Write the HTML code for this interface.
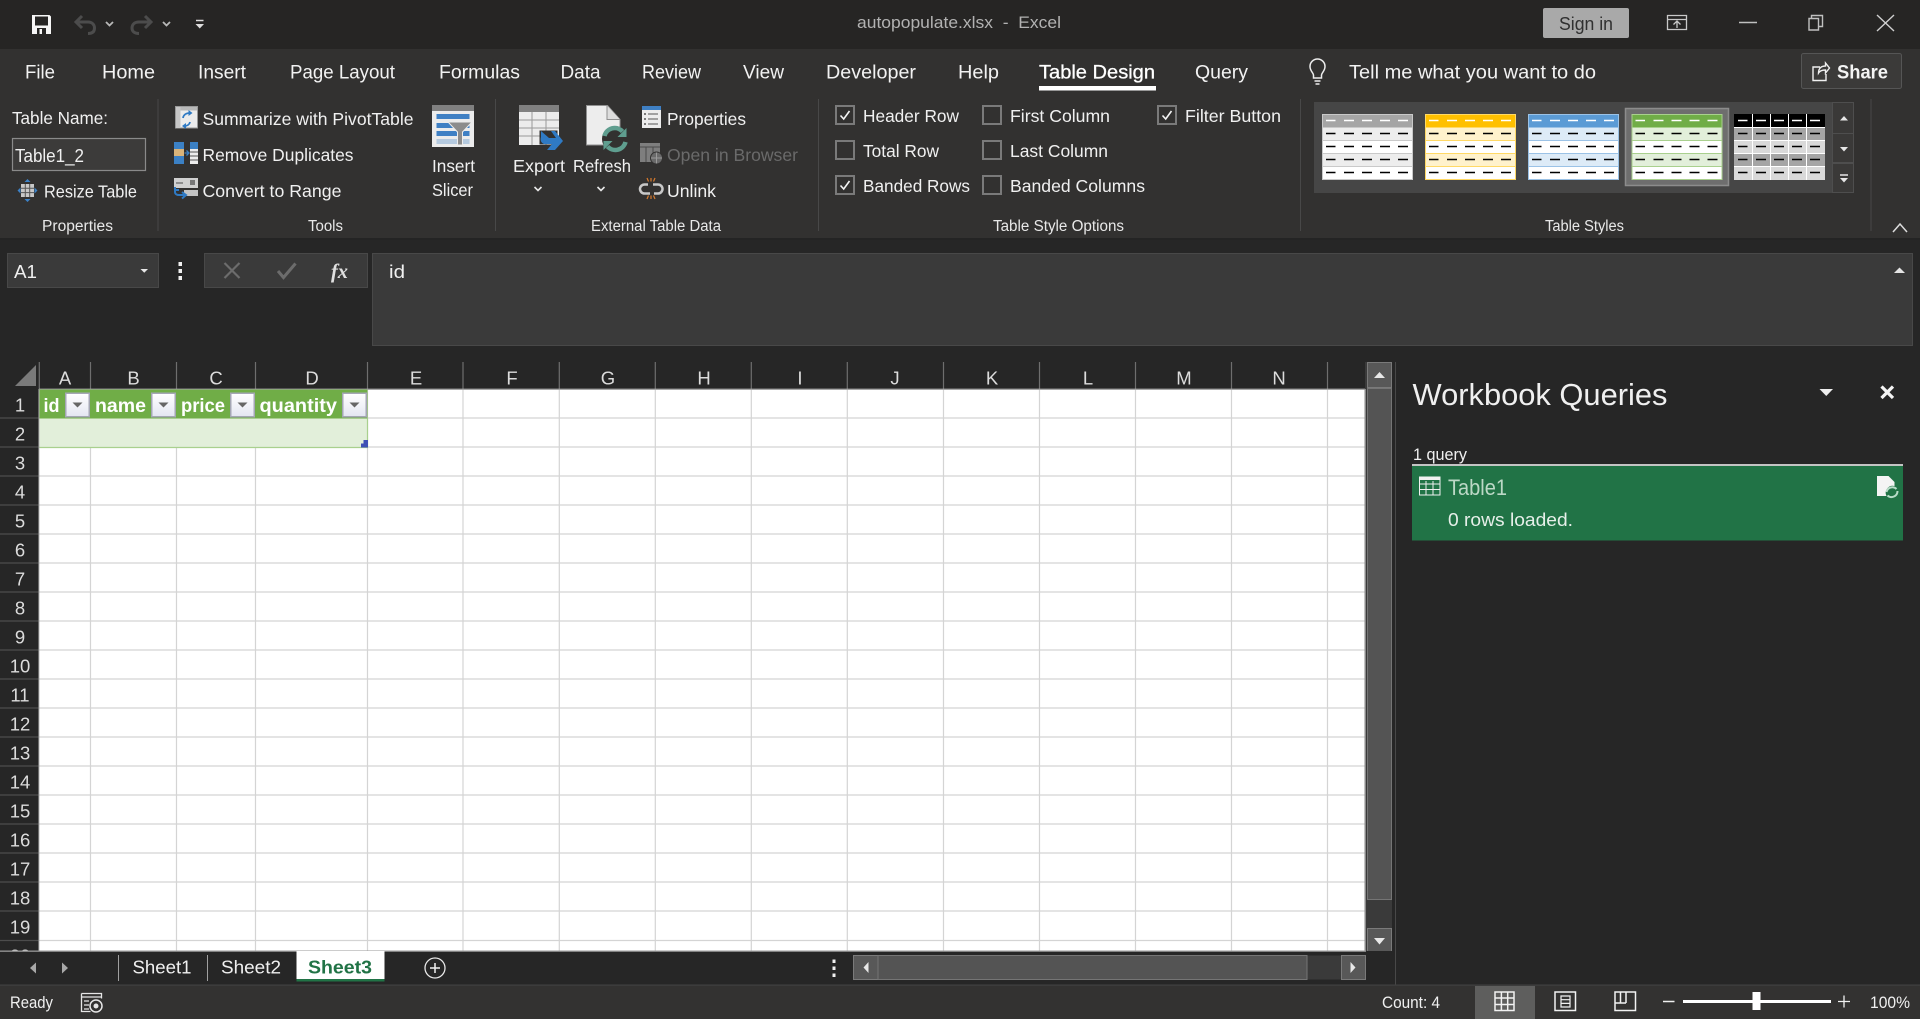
<!DOCTYPE html>
<html lang="en"><head><meta charset="utf-8"><title>autopopulate.xlsx - Excel</title>
<style>
html,body{margin:0;padding:0;width:1920px;height:1019px;overflow:hidden;background:#262626}
svg{display:block}
text{font-family:"Liberation Sans",sans-serif;font-size:17.5px;fill:#f0f0f0}
.t{font-size:19px;fill:#f2f2f2}
.g{font-size:15.5px;fill:#e8e8e8}
.h{font-size:18.5px;fill:#dcdcdc;text-anchor:middle}
.b{font-weight:bold;font-size:19px;fill:#fff}
</style></head><body>
<svg width="1920" height="1019" viewBox="0 0 1920 1019" xmlns="http://www.w3.org/2000/svg">
<defs>
<clipPath id="gridclip"><rect x="0" y="389" width="1366" height="562"/></clipPath>
<linearGradient id="fb" x1="0" y1="0" x2="0" y2="1"><stop offset="0" stop-color="#fff"/><stop offset="1" stop-color="#e4e6f2"/></linearGradient>
<g id="dash">
<path d="M4 6.5h9.500M22 6.500h10M40 6.500h10M58 6.500h10M76 6.500h10" stroke="#fff" stroke-width="1.500" fill="none"/>
<path d="M4 19.500h9.500M22 19.500h10M40 19.500h10M58 19.500h10M76 19.500h10M4 32.500h9.500M22 32.500h10M40 32.500h10M58 32.500h10M76 32.500h10M4 45.500h9.500M22 45.500h10M40 45.500h10M58 45.500h10M76 45.500h10M4 58.500h9.500M22 58.500h10M40 58.500h10M58 58.500h10M76 58.500h10" stroke="#000" stroke-width="1.500" fill="none"/>
</g>
<g id="fbtn"><rect x=".75" y=".75" width="23.500" height="23.500" fill="url(#fb)" stroke="#a4a6b4" stroke-width="1.500"/><path d="M7.500 10h10l-5 5z" fill="#666"/></g>
<g id="cb"><rect x="1" y="1" width="18" height="18" fill="none" stroke="#7a7a7a" stroke-width="2"/></g>
<g id="ck"><path d="M5.500 10.500l3.200 3.500 5.800-8" fill="none" stroke="#f4f4f4" stroke-width="1.600"/></g>
</defs>

<!-- Backgrounds -->
<rect width="1920" height="1019" fill="#262626"/>
<rect y="0" width="1920" height="49" fill="#262524"/>
<rect y="49" width="1920" height="189" fill="#323130"/>
<rect y="238" width="1920" height="2" fill="#242424"/>

<!-- Quick access -->
<path d="M32 15h17.500l1.500 1.500V34H32z" fill="#f6f6f6"/>
<rect x="35" y="16.500" width="13" height="9" fill="#262524"/>
<rect x="37" y="28" width="9" height="6" fill="#262524"/>
<rect x="39.500" y="29" width="2.500" height="5" fill="#f6f6f6"/>
<path d="M88 33.500c5 0 6.500-2.500 6.500-5.500s-2-6-6.500-6H76M82 16l-6 6 6 6" fill="none" stroke="#4c4c4c" stroke-width="3"/>
<path d="M106 22l3.500 3.500L113 22" fill="none" stroke="#b8b8b8" stroke-width="1.800"/>
<path d="M139 33.500c-5 0-7-2.500-7-5.500s2-6 7-6h12M145 16l6 6-6 6" fill="none" stroke="#4c4c4c" stroke-width="3"/>
<path d="M163 22l3.500 3.500 3.500-3.500" fill="none" stroke="#b8b8b8" stroke-width="1.800"/>
<path d="M196 20.500h7.500" stroke="#ddd" stroke-width="1.500"/><path d="M195.500 24h8.500l-4.250 4.500z" fill="#ddd"/>

<!-- Title -->
<text x="857" y="28" textLength="204" lengthAdjust="spacingAndGlyphs" style="font-size:17px;fill:#b2b2b2" xml:space="preserve">autopopulate.xlsx  -  Excel</text>
<rect x="1543" y="8" width="86" height="30" rx="2" fill="#a9a9a9"/>
<text x="1559" y="30" textLength="54" lengthAdjust="spacingAndGlyphs" style="font-size:18px;fill:#303030">Sign in</text>
<path d="M1667.500 15.500h19v14h-19zM1667.500 19.500h19M1677 28v-7M1673.500 24.500l3.500-3.500 3.500 3.500" fill="none" stroke="#c8c8c8" stroke-width="1.300"/>
<path d="M1739 22.500h18" stroke="#c0c0c0" stroke-width="1.500"/>
<path d="M1809 18.500h9.500v11.500H1809zM1811.500 18.500v-3h11v11h-4" fill="none" stroke="#c0c0c0" stroke-width="1.400"/>
<path d="M1877 15l17 16M1894 15l-17 16" stroke="#d0d0d0" stroke-width="1.400"/>

<!-- Tabs -->
<text class="t" x="25" y="78.500" textLength="30" lengthAdjust="spacingAndGlyphs">File</text>
<text class="t" x="102" y="78.500" textLength="53" lengthAdjust="spacingAndGlyphs">Home</text>
<text class="t" x="198" y="78.500" textLength="48" lengthAdjust="spacingAndGlyphs">Insert</text>
<text class="t" x="290" y="78.500" textLength="105" lengthAdjust="spacingAndGlyphs">Page Layout</text>
<text class="t" x="439" y="78.500" textLength="81" lengthAdjust="spacingAndGlyphs">Formulas</text>
<text class="t" x="560.500" y="78.500" textLength="40" lengthAdjust="spacingAndGlyphs">Data</text>
<text class="t" x="642" y="78.500" textLength="59" lengthAdjust="spacingAndGlyphs">Review</text>
<text class="t" x="743" y="78.500" textLength="41" lengthAdjust="spacingAndGlyphs">View</text>
<text class="t" x="826" y="78.500" textLength="90" lengthAdjust="spacingAndGlyphs">Developer</text>
<text class="t" x="958" y="78.500" textLength="41" lengthAdjust="spacingAndGlyphs">Help</text>
<text class="t" x="1039" y="78.500" textLength="116" lengthAdjust="spacingAndGlyphs" style="fill:#fff;stroke:#fff;stroke-width:.3">Table Design</text>
<rect x="1039" y="86" width="117" height="4.500" fill="#fff"/>
<text class="t" x="1195" y="78.500" textLength="53" lengthAdjust="spacingAndGlyphs">Query</text>
<path d="M1313.500 78h8v-3c0-2 3.500-4 3.500-8.500a7.500 7.500 0 0 0-15 0c0 4.500 3.500 6.500 3.500 8.500zM1314.500 81h6M1315.500 84h4" fill="none" stroke="#ececec" stroke-width="1.500"/>
<text class="t" x="1349" y="78.500" textLength="247" lengthAdjust="spacingAndGlyphs">Tell me what you want to do</text>
<rect x="1801.500" y="53.500" width="100" height="35" rx="2" fill="#3b3a39" stroke="#555" stroke-width="1"/>
<path d="M1820 67h-7v13.500h13V74M1818.500 73c0-5 3-7 7-7v-3l4 5-4 5v-3c-3 0-5.500 .5-7 3z" fill="none" stroke="#f0f0f0" stroke-width="1.400"/>
<text x="1837" y="78.500" textLength="51" lengthAdjust="spacingAndGlyphs" style="font-size:19px;font-weight:bold;fill:#f4f4f4">Share</text>

<!-- Properties group -->
<text x="12" y="124" textLength="96" lengthAdjust="spacingAndGlyphs">Table Name:</text>
<rect x="12.500" y="138.500" width="133" height="32" fill="#3c3b3a" stroke="#8a8a8a" stroke-width="1.200"/>
<text x="15" y="162" textLength="69" lengthAdjust="spacingAndGlyphs" style="font-size:18px">Table1_2</text>
<rect x="21" y="184" width="13" height="13" fill="#c8c8c8"/>
<path d="M21 188.300h13M21 192.600h13M25.300 184v13M29.700 184v13" stroke="#555" stroke-width="1"/>
<path d="M27.500 179l3 3h-6zM27.500 202l3-3h-6zM17.500 190.500l3-3v6zM37.500 190.500l-3-3v6z" fill="#3c82c8"/>
<text x="44" y="197.500" textLength="93" lengthAdjust="spacingAndGlyphs">Resize Table</text>
<text class="g" x="42" y="231" textLength="71" lengthAdjust="spacingAndGlyphs">Properties</text>
<rect x="157.500" y="99" width="1" height="132" fill="#484848"/>

<!-- Tools group -->
<rect x="175.500" y="106.500" width="22" height="21.500" fill="#ececec" stroke="#999"/>
<rect x="176" y="107" width="21" height="3.500" fill="#b8b8b8"/>
<rect x="176" y="107" width="4.500" height="21" fill="#c6c6c6"/>
<path d="M183 118c.5-3 3-5 7-5M190 122c-.5 2.500-3 4-6 4" fill="none" stroke="#2f7ac4" stroke-width="1.800"/>
<path d="M188.500 110l4 3-4 3zM186 123l-4 3 4 3z" fill="#2f7ac4"/>
<rect x="174" y="142" width="10" height="22" fill="#3b80c4"/><rect x="174" y="149" width="10" height="7" fill="#d9b379"/>
<rect x="190" y="142" width="8" height="22" fill="#3b80c4"/><rect x="190" y="149" width="8" height="15" fill="#ededed"/>
<path d="M184.500 153h4M186.500 150.500l2.500 2.500-2.500 2.500" stroke="#3b80c4" fill="none" stroke-width="1.300"/>
<path d="M190 152h8M190 156h8M190 160h8" stroke="#555" stroke-width="1"/>
<rect x="174" y="178" width="24" height="10" fill="#d0d0d0"/><rect x="190" y="180" width="5" height="5" fill="#777"/><path d="M176 183h7" stroke="#777" stroke-width="1.500"/>
<rect x="184" y="190" width="14" height="6" fill="#c4c4c4"/><path d="M175 190v2c0 2 2 3 4 3h7M182 192l4 3-4 3.500" stroke="#2f7ac4" stroke-width="2" fill="none"/>
<path d="M175 187v3h4" stroke="#2f7ac4" stroke-width="2" fill="none"/>
<text x="202.500" y="125" textLength="211" lengthAdjust="spacingAndGlyphs">Summarize with PivotTable</text>
<text x="202.500" y="161" textLength="151" lengthAdjust="spacingAndGlyphs">Remove Duplicates</text>
<text x="202.500" y="197" textLength="139" lengthAdjust="spacingAndGlyphs">Convert to Range</text>
<rect x="432" y="105" width="42" height="42" fill="#ececec"/><rect x="432" y="105" width="42" height="6" fill="#808080"/>
<rect x="436.500" y="114" width="33" height="5" fill="#3f80c4"/><rect x="436.500" y="123" width="33" height="5" fill="#3f80c4"/><rect x="436.500" y="131" width="33" height="5" fill="#3f80c4"/><rect x="436.500" y="139" width="33" height="5" fill="#b5cadf"/>
<path d="M448 122h24l-9.500 10v13h-5v-13z" fill="#8c8c8c" stroke="#ececec" stroke-width="1"/>
<text x="432" y="172" textLength="43" lengthAdjust="spacingAndGlyphs">Insert</text>
<text x="432" y="196" textLength="41" lengthAdjust="spacingAndGlyphs">Slicer</text>
<text class="g" x="308" y="231" textLength="35" lengthAdjust="spacingAndGlyphs">Tools</text>
<rect x="495" y="99" width="1" height="132" fill="#484848"/>

<!-- External -->
<rect x="519" y="105" width="40" height="40" fill="#ececec"/><rect x="519" y="105" width="40" height="7" fill="#808080"/>
<path d="M519 120h40M519 128h40M519 136h40M532 112v33M546 112v33" stroke="#999" stroke-width="1"/>
<rect x="540" y="131" width="17" height="13" fill="#323130" stroke="#323130"/>
<path d="M541 131l8 7h7l-5-7h4l8 10-8 9h-8l5-6h-8c-3-1-4-4-3-7z" fill="#2f7ac4"/>
<path d="M586.500 105.500h21l12.500 14V145h-33.500z" fill="#ededed" stroke="#909090"/>
<path d="M607 105.500v14h13" fill="#ddd" stroke="#909090"/>
<circle cx="615" cy="139" r="13" fill="#323130"/>
<path d="M604.500 136a10.500 10.500 0 0 1 18-4.500M625.500 142a10.500 10.500 0 0 1-18 4.500" fill="none" stroke="#5f9e8f" stroke-width="4.500"/>
<path d="M626.500 128v9h-9zM603.500 150v-9h9z" fill="#5f9e8f"/>
<text x="513" y="172" textLength="52" lengthAdjust="spacingAndGlyphs">Export</text>
<path d="M534.500 187l3.500 3.500 3.500-3.500" fill="none" stroke="#e8e8e8" stroke-width="1.600"/>
<text x="573" y="172" textLength="58" lengthAdjust="spacingAndGlyphs">Refresh</text>
<path d="M597.500 187l3.500 3.500 3.500-3.500" fill="none" stroke="#e8e8e8" stroke-width="1.600"/>
<rect x="642" y="106" width="19" height="22" fill="#ececec"/><rect x="642" y="106" width="19" height="4" fill="#3f80c4"/>
<path d="M648 114h10M648 119h10M648 124h10" stroke="#555" stroke-width="1"/><path d="M644 114h2M644 119h2M644 124h2" stroke="#555" stroke-width="1.500"/>
<rect x="640" y="143" width="20" height="19" fill="#7e7e7e"/><path d="M640 147h20M646 147v15M653 147v15" stroke="#4a4a4a" stroke-width="1"/>
<circle cx="656.500" cy="158" r="6" fill="#6a6a6a" stroke="#323130"/><path d="M651 158h11M656.500 152.500v11" stroke="#9a9a9a" stroke-width="1"/>
<path d="M648 184.500h-3.500a4.500 4.500 0 0 0 0 9h5.500M653 184.500h5a4.500 4.500 0 0 1 0 9h-4" fill="none" stroke="#c8c8c8" stroke-width="2.500"/>
<path d="M647 178l1.500 3.500M651 178v3.500M655 178l-1.500 3.500M647 199l1.500-3.500M651 199v-3.500M655 199l-1.500-3.500" stroke="#d77a2d" stroke-width="1.200"/>
<text x="667" y="125" textLength="79" lengthAdjust="spacingAndGlyphs">Properties</text>
<text x="667" y="161" textLength="131" lengthAdjust="spacingAndGlyphs" style="fill:#6a6a6a">Open in Browser</text>
<text x="667" y="197" textLength="49" lengthAdjust="spacingAndGlyphs">Unlink</text>
<text class="g" x="591" y="231" textLength="130" lengthAdjust="spacingAndGlyphs">External Table Data</text>
<rect x="818" y="99" width="1" height="132" fill="#484848"/>

<!-- Table style options -->
<use href="#cb" x="835" y="105"/><use href="#ck" x="835" y="105"/>
<use href="#cb" x="835" y="140"/>
<use href="#cb" x="835" y="175"/><use href="#ck" x="835" y="175"/>
<use href="#cb" x="982" y="105"/><use href="#cb" x="982" y="140"/><use href="#cb" x="982" y="175"/>
<use href="#cb" x="1157" y="105"/><use href="#ck" x="1157" y="105"/>
<text x="863" y="122" textLength="96" lengthAdjust="spacingAndGlyphs">Header Row</text>
<text x="863" y="157" textLength="76" lengthAdjust="spacingAndGlyphs">Total Row</text>
<text x="863" y="192" textLength="107" lengthAdjust="spacingAndGlyphs">Banded Rows</text>
<text x="1010" y="122" textLength="100" lengthAdjust="spacingAndGlyphs">First Column</text>
<text x="1010" y="157" textLength="98" lengthAdjust="spacingAndGlyphs">Last Column</text>
<text x="1010" y="192" textLength="135" lengthAdjust="spacingAndGlyphs">Banded Columns</text>
<text x="1185" y="122" textLength="96" lengthAdjust="spacingAndGlyphs">Filter Button</text>
<text class="g" x="993" y="231" textLength="131" lengthAdjust="spacingAndGlyphs">Table Style Options</text>
<rect x="1300" y="99" width="1" height="132" fill="#484848"/>

<!-- Table styles gallery -->
<rect x="1314" y="102" width="518" height="91" fill="#464646"/>
<rect x="1625.500" y="108.500" width="103" height="77" fill="#6e6e6e" stroke="#8c8c8c" stroke-width="1.500"/>
<g transform="translate(1322,114)"><rect width="91" height="66" fill="#fff"/><rect width="91" height="13" fill="#a5a5a5"/><rect y="13" width="91" height="13" fill="#ededed"/><rect y="39" width="91" height="13" fill="#ededed"/><path d="M0 13.500h91M0 26.500h91M0 39.500h91M0 52.500h91" stroke="#c9c9c9"/><rect x=".5" y=".5" width="90" height="65" fill="none" stroke="#c9c9c9"/><use href="#dash"/></g>
<g transform="translate(1425,114)"><rect width="91" height="66" fill="#fff"/><rect width="91" height="13" fill="#ffc000"/><rect y="13" width="91" height="13" fill="#fff2cc"/><rect y="39" width="91" height="13" fill="#fff2cc"/><path d="M0 13.500h91M0 26.500h91M0 39.500h91M0 52.500h91" stroke="#ffd966"/><rect x=".5" y=".5" width="90" height="65" fill="none" stroke="#ffd966"/><use href="#dash"/></g>
<g transform="translate(1528,114)"><rect width="91" height="66" fill="#fff"/><rect width="91" height="13" fill="#5b9bd5"/><rect y="13" width="91" height="13" fill="#ddebf7"/><rect y="39" width="91" height="13" fill="#ddebf7"/><path d="M0 13.500h91M0 26.500h91M0 39.500h91M0 52.500h91" stroke="#9bc2e6"/><rect x=".5" y=".5" width="90" height="65" fill="none" stroke="#9bc2e6"/><use href="#dash"/></g>
<g transform="translate(1631.500,114)"><rect width="91" height="66" fill="#fff"/><rect width="91" height="13" fill="#70ad47"/><rect y="13" width="91" height="13" fill="#e2efda"/><rect y="39" width="91" height="13" fill="#e2efda"/><path d="M0 13.500h91M0 26.500h91M0 39.500h91M0 52.500h91" stroke="#a9d08e"/><rect x=".5" y=".5" width="90" height="65" fill="none" stroke="#a9d08e"/><use href="#dash"/></g>
<g transform="translate(1734,114)"><rect width="91" height="66" fill="#d9d9d9"/><rect width="91" height="13" fill="#000"/><rect y="13" width="91" height="13" fill="#a5a5a5"/><rect y="39" width="91" height="13" fill="#a5a5a5"/><path d="M0 13.500h91M0 26.500h91M0 39.500h91M0 52.500h91M18.500 0v66M36.500 0v66M54.500 0v66M72.500 0v66" stroke="#fff"/><use href="#dash"/></g>
<rect x="1832.500" y="102.500" width="21" height="31" fill="#3a3938" stroke="#4e4e4e"/>
<rect x="1832.500" y="133.500" width="21" height="29" fill="#3a3938" stroke="#4e4e4e"/>
<rect x="1832.500" y="163.500" width="21" height="29" fill="#3a3938" stroke="#4e4e4e"/>
<path d="M1844 116l4 4.500h-8z" fill="#e6e6e6"/><path d="M1840 147h8l-4 4.500z" fill="#e6e6e6"/><path d="M1840 175h8" stroke="#e6e6e6" stroke-width="1.500"/><path d="M1840 178h8l-4 4.500z" fill="#e6e6e6"/>
<text class="g" x="1545" y="231" textLength="79" lengthAdjust="spacingAndGlyphs">Table Styles</text>
<rect x="1870.500" y="99" width="1" height="132" fill="#484848"/>
<path d="M1893 232l7-8 7 8" fill="none" stroke="#dcdcdc" stroke-width="1.500"/>

<!-- Formula bar -->
<rect x="7.500" y="253.500" width="151" height="34" fill="#3a3a3a" stroke="#484848"/>
<text x="14" y="278" textLength="23" lengthAdjust="spacingAndGlyphs" style="font-size:18px">A1</text>
<path d="M140.500 269h7.500l-3.750 3.700z" fill="#e8e8e8"/>
<rect x="178.500" y="262" width="3.500" height="4" fill="#f0f0f0"/><rect x="178.500" y="269" width="3.500" height="4" fill="#f0f0f0"/><rect x="178.500" y="276" width="3.500" height="4" fill="#f0f0f0"/>
<rect x="204.500" y="253.500" width="163" height="34" fill="#3a3a3a" stroke="#484848"/>
<path d="M224.500 263l15 15M239.500 263l-15 15" stroke="#6c6c6c" stroke-width="2.200"/>
<path d="M278 271l5.500 6.500 12-14" fill="none" stroke="#6c6c6c" stroke-width="3"/>
<text x="331" y="278" textLength="17" lengthAdjust="spacingAndGlyphs" style="font-family:'Liberation Serif',serif;font-style:italic;font-weight:bold;font-size:21px;fill:#e0e0e0">fx</text>
<rect x="372.500" y="253.500" width="1540" height="92" fill="#3a3a3a" stroke="#484848"/>
<text x="389" y="278" textLength="16" lengthAdjust="spacingAndGlyphs" style="font-size:18.500px">id</text>
<path d="M1894 273l5.500-5.500 5.500 5.500z" fill="#e4e4e4"/>

<!-- Grid -->
<rect x="39" y="389" width="1326" height="562" fill="#fff"/>
<path d="M39 418h1326M39 447h1326M39 476h1326M39 505h1326M39 534h1326M39 563h1326M39 592h1326M39 621h1326M39 650h1326M39 679h1326M39 708h1326M39 737h1326M39 766h1326M39 795h1326M39 824h1326M39 853h1326M39 882h1326M39 911h1326M39 940.500h1326" stroke="#d4d4d4" stroke-width="1.300" fill="none"/>
<path d="M90.500 389v562M176.500 389v562M255.500 389v562M367.500 389v562M463 389v562M559.300 389v562M655.300 389v562M751.300 389v562M847.300 389v562M943.500 389v562M1039.500 389v562M1135.500 389v562M1231.500 389v562M1327.500 389v562" stroke="#d4d4d4" stroke-width="1.200" fill="none"/>
<!-- Headers -->
<path d="M36 365v21H15z" fill="#7a7a7a"/>
<path d="M39.300 362v27M90.500 362v27M176.500 362v27M255.500 362v27M367.500 362v27M463 362v27M559.300 362v27M655.300 362v27M751.300 362v27M847.300 362v27M943.500 362v27M1039.500 362v27M1135.500 362v27M1231.500 362v27M1327.500 362v27" stroke="#6e6e6e" stroke-width="1.200" fill="none"/>
<path d="M39 389.300h1326" stroke="#a8a8a8" stroke-width="1.300"/>
<path d="M0 418h39M0 447h39M0 476h39M0 505h39M0 534h39M0 563h39M0 592h39M0 621h39M0 650h39M0 679h39M0 708h39M0 737h39M0 766h39M0 795h39M0 824h39M0 853h39M0 882h39M0 911h39M0 940.500h39" stroke="#4c4c4c" stroke-width="1.200"/>
<rect x="38.300" y="389" width="1" height="562" fill="#8e8e8e"/>
<text class="h" x="65" y="384.500">A</text><text class="h" x="133.500" y="384.500">B</text><text class="h" x="216" y="384.500">C</text><text class="h" x="312" y="384.500">D</text><text class="h" x="416" y="384.500">E</text><text class="h" x="512" y="384.500">F</text><text class="h" x="608" y="384.500">G</text><text class="h" x="704" y="384.500">H</text><text class="h" x="800" y="384.500">I</text><text class="h" x="895" y="384.500">J</text><text class="h" x="992" y="384.500">K</text><text class="h" x="1088" y="384.500">L</text><text class="h" x="1184" y="384.500">M</text><text class="h" x="1279" y="384.500">N</text>
<g clip-path="url(#gridclip)">
<text class="h" x="20" y="411.300">1</text><text class="h" x="20" y="440.300">2</text><text class="h" x="20" y="469.300">3</text><text class="h" x="20" y="498.300">4</text><text class="h" x="20" y="527.300">5</text><text class="h" x="20" y="556.300">6</text><text class="h" x="20" y="585.300">7</text><text class="h" x="20" y="614.300">8</text><text class="h" x="20" y="643.300">9</text><text class="h" x="20" y="672.300">10</text><text class="h" x="20" y="701.300">11</text><text class="h" x="20" y="730.300">12</text><text class="h" x="20" y="759.300">13</text><text class="h" x="20" y="788.300">14</text><text class="h" x="20" y="817.300">15</text><text class="h" x="20" y="846.300">16</text><text class="h" x="20" y="875.300">17</text><text class="h" x="20" y="904.300">18</text><text class="h" x="20" y="933.300">19</text><text class="h" x="20" y="962.300">20</text>
</g>
<!-- Table -->
<rect x="39.500" y="389.500" width="328" height="29" fill="#70ad47"/>
<rect x="39.500" y="418.500" width="328" height="29" fill="#e2efda"/>
<path d="M39.500 447.500h328v-29" fill="none" stroke="#a9d08e" stroke-width="1.200"/>
<path d="M361 447.500v-4h2.500v-3.500h4.500v7.500z" fill="#3f51b5"/>
<text class="b" x="43.500" y="412" textLength="16" lengthAdjust="spacingAndGlyphs">id</text>
<text class="b" x="95" y="412" textLength="51" lengthAdjust="spacingAndGlyphs">name</text>
<text class="b" x="181" y="412" textLength="44" lengthAdjust="spacingAndGlyphs">price</text>
<text class="b" x="259.500" y="412" textLength="77.500" lengthAdjust="spacingAndGlyphs">quantity</text>
<use href="#fbtn" x="65" y="392.500"/><use href="#fbtn" x="151" y="392.500"/><use href="#fbtn" x="230" y="392.500"/><use href="#fbtn" x="342" y="392.500"/>

<!-- Vertical scrollbar -->
<rect x="1365" y="362" width="27" height="589" fill="#3a3a3a"/>
<rect x="1364.500" y="389" width="1.500" height="562" fill="#8a8a8a"/>
<rect x="1367.500" y="362.500" width="24" height="25" fill="#585858" stroke="#7a7a7a"/>
<path d="M1379.500 372l5.500 6h-11z" fill="#e8e8e8"/>
<rect x="1367.500" y="388.500" width="24" height="511" fill="#545454" stroke="#757575"/>
<rect x="1367.500" y="928.500" width="24" height="24" fill="#585858" stroke="#7a7a7a"/>
<path d="M1374 938h11l-5.500 6.500z" fill="#e8e8e8"/>
<rect x="1395" y="362" width="1" height="623" fill="#484848"/>

<!-- Workbook Queries pane -->
<text x="1412.500" y="405" textLength="255" lengthAdjust="spacingAndGlyphs" style="font-size:31px;fill:#f0f0f0">Workbook Queries</text>
<path d="M1819.500 389h13.500l-6.750 7z" fill="#eee"/>
<path d="M1881.500 386.500l11.500 11.500M1893 386.500l-11.500 11.500" stroke="#f4f4f4" stroke-width="3.200"/>
<text x="1413" y="460" textLength="54" lengthAdjust="spacingAndGlyphs" style="font-size:17px">1 query</text>
<rect x="1412" y="464" width="491" height="2" fill="#c4c4c4"/>
<rect x="1412" y="466" width="491" height="74.500" fill="#217346"/>
<path d="M1419.500 477h20.500v18h-20.500zM1419.500 484h20.500M1419.500 489.500h20.500M1426 481v14M1433 481v14" fill="none" stroke="#f0f0f0" stroke-width="1"/>
<rect x="1419.500" y="476.500" width="20.500" height="3.500" fill="#f0f0f0"/>
<text x="1448" y="495" textLength="59" lengthAdjust="spacingAndGlyphs" style="font-size:22px;fill:#bcd8c6">Table1</text>
<text x="1448" y="526" textLength="125" lengthAdjust="spacingAndGlyphs" style="font-size:18px;fill:#e6efe9">0 rows loaded.</text>
<path d="M1877 493v-17h11.500l6 6v4a7 7 0 0 0-8 10h-9.500z" fill="#f4f4f4"/>
<path d="M1886.500 492a6 6 0 0 1 10-3M1897.500 491a6 6 0 0 1-10 4.500" fill="none" stroke="#b8dcc8" stroke-width="2"/>

<!-- Sheet tabs -->
<rect x="0" y="951" width="1392" height="34" fill="#262626"/>
<rect x="0" y="950.500" width="1366" height="1.300" fill="#9a9a9a"/>
<path d="M36 962.500v11l-6-5.500zM62 962.500v11l6-5.500z" fill="#a8a8a8"/>
<rect x="118" y="955" width="1" height="26" fill="#a0a0a0"/><rect x="207" y="955" width="1" height="26" fill="#a0a0a0"/>
<text x="132.500" y="973.500" textLength="59" lengthAdjust="spacingAndGlyphs" style="font-size:18.500px">Sheet1</text>
<text x="221" y="973.500" textLength="60" lengthAdjust="spacingAndGlyphs" style="font-size:18.500px">Sheet2</text>
<rect x="296.500" y="951" width="88" height="30" fill="#fff"/><rect x="296.500" y="979" width="88" height="2.500" fill="#217346"/>
<text x="308" y="973.500" textLength="64" lengthAdjust="spacingAndGlyphs" style="font-size:18.500px;font-weight:bold;fill:#217346">Sheet3</text>
<circle cx="435" cy="968" r="10" fill="none" stroke="#e8e8e8" stroke-width="1.300"/>
<path d="M435 963v10M430 968h10" stroke="#f0f0f0" stroke-width="1.500"/>
<rect x="832.500" y="959.500" width="3" height="3.500" fill="#f0f0f0"/><rect x="832.500" y="966.500" width="3" height="3.500" fill="#f0f0f0"/><rect x="832.500" y="973.500" width="3" height="3.500" fill="#f0f0f0"/>
<!-- Horizontal scrollbar -->
<rect x="853.500" y="955.500" width="512" height="24" fill="#3a3a3a"/>
<rect x="853.500" y="955.500" width="24.500" height="24" fill="#585858" stroke="#7a7a7a"/>
<rect x="878" y="955.500" width="429" height="24" fill="#545454" stroke="#757575"/>
<rect x="1341.500" y="955.500" width="24" height="24" fill="#585858" stroke="#7a7a7a"/>
<path d="M868.500 962v11l-5-5.500zM1350.500 962v11l5-5.500z" fill="#e8e8e8"/>

<!-- Status bar -->
<rect x="0" y="985" width="1920" height="34" fill="#333231"/>
<rect x="0" y="984.500" width="1920" height="1.200" fill="#414141"/>
<text x="10" y="1008" textLength="43" lengthAdjust="spacingAndGlyphs" style="font-size:16.500px">Ready</text>
<path d="M81.500 993.500h20v5M81.500 997h20M81.500 993.500v18h9M84 1001h5M84 1005h5M84 1009h5" fill="none" stroke="#e6e6e6" stroke-width="1.300"/>
<circle cx="96" cy="1006" r="6" fill="#333231" stroke="#e6e6e6" stroke-width="1.500"/><circle cx="96" cy="1006" r="2.500" fill="#e6e6e6"/>
<text x="1382" y="1008" textLength="58" lengthAdjust="spacingAndGlyphs" style="font-size:16.500px">Count: 4</text>
<rect x="1475" y="986" width="60" height="33" fill="#5e5e5d"/>
<path d="M1495 992h19v18.500h-19zM1501.400 992v18.500M1507.700 992v18.500M1495 998h19M1495 1004.500h19" fill="none" stroke="#f2f2f2" stroke-width="1.500"/>
<path d="M1555 992h20.500v18.500H1555z" fill="none" stroke="#f2f2f2" stroke-width="1.500"/>
<path d="M1561 996h9v11h-9zM1561 999.700h9M1561 1003.400h9" fill="none" stroke="#f2f2f2" stroke-width="1.200"/>
<path d="M1615 992h20.500v18.500H1615zM1615 1003h11M1620.500 992v11M1626 992v11" fill="none" stroke="#f2f2f2" stroke-width="1.500"/>
<path d="M1663 1001.500h11.500" stroke="#f0f0f0" stroke-width="1.500"/>
<rect x="1683" y="1000" width="148" height="3" fill="#fff"/>
<rect x="1752.500" y="992" width="8" height="18" fill="#fff"/>
<path d="M1838 1001.500h12M1844 995.500v12" stroke="#f0f0f0" stroke-width="1.300"/>
<text x="1870" y="1008" textLength="40" lengthAdjust="spacingAndGlyphs" style="font-size:16.500px">100%</text>
</svg>
</body></html>
